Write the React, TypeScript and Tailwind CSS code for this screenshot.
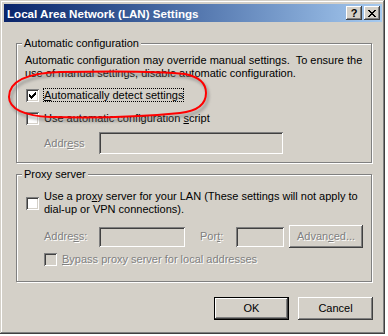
import React from 'react';

const raised =
  'shadow-[inset_-1px_-1px_0_#404040,inset_1px_1px_0_#ffffff,inset_-2px_-2px_0_#808080,inset_2px_2px_0_#d4d0c8]';
const sunken =
  'shadow-[inset_1px_1px_0_#808080,inset_-1px_-1px_0_#ffffff,inset_2px_2px_0_#404040,inset_-2px_-2px_0_#d4d0c8]';

function CheckBox({ checked, disabled }: { checked?: boolean; disabled?: boolean }) {
  return (
    <div
      className={`relative w-[13px] h-[13px] shrink-0 ${disabled ? 'bg-[#d4d0c8]' : 'bg-white'} ${sunken}`}
    >
      {checked && (
        <svg className="absolute left-[3px] top-[3px]" width="7" height="7" shapeRendering="crispEdges">
          <rect x="0" y="2" width="1" height="3" fill="#000" />
          <rect x="1" y="3" width="1" height="3" fill="#000" />
          <rect x="2" y="4" width="1" height="3" fill="#000" />
          <rect x="3" y="3" width="1" height="3" fill="#000" />
          <rect x="4" y="2" width="1" height="3" fill="#000" />
          <rect x="5" y="1" width="1" height="3" fill="#000" />
          <rect x="6" y="0" width="1" height="3" fill="#000" />
        </svg>
      )}
    </div>
  );
}

function Field({ className }: { className: string }) {
  return <div className={`bg-[#d4d0c8] ${sunken} ${className}`} />;
}

function Legend({ children }: { children: React.ReactNode }) {
  return (
    <span className="absolute left-[7px] top-[-7px] bg-[#d4d0c8] px-[2px] ml-[-2px] leading-[13px]">
      {children}
    </span>
  );
}

const dim = 'text-[#808080] [text-shadow:1px_1px_0_#ffffff]';

export default function App() {
  return (
    <div className="relative w-[388px] h-[336px] bg-white font-['Liberation_Sans',Arial,sans-serif] text-[11px] leading-[13px] text-black">
      <div className="w-[385px] h-[334px] bg-[#d4d0c8] pt-[4px] pl-[4px] pr-[3px] shadow-[inset_-1px_-1px_0_#404040,inset_1px_1px_0_#d4d0c8,inset_-2px_-2px_0_#808080,inset_2px_2px_0_#ffffff]">
        {/* title bar */}
        <div className="flex items-center h-[18px] pl-[3px] pr-[2px] bg-gradient-to-r from-[#0a246a] to-[#a6caf0]">
          <span className="flex-1 text-white font-bold text-[11.6px]">Local Area Network (LAN) Settings</span>
          <div className={`w-[16px] h-[14px] bg-[#d4d0c8] ${raised} flex items-center justify-center font-bold text-[11px]`}>?</div>
          <div className={`ml-[2px] w-[16px] h-[14px] bg-[#d4d0c8] ${raised} flex items-center justify-center`}>
            <svg width="8" height="7" shapeRendering="crispEdges">
              <path d="M0 0h2v1h-2zM6 0h2v1h-2zM1 1h2v1h-2zM5 1h2v1h-2zM2 2h4v1h-4zM3 3h2v1h-2zM2 4h4v1h-4zM1 5h2v1h-2zM5 5h2v1h-2zM0 6h2v1h-2zM6 6h2v1h-2z" fill="#000" />
            </svg>
          </div>
        </div>

        <div className="pl-[12px]">
          {/* Automatic configuration */}
          <div className="relative mt-[21px] w-[356px] h-[120px] border border-[#808080] shadow-[1px_1px_0_#ffffff,inset_1px_1px_0_#ffffff] pl-[8px] pt-[10px]">
            <Legend>Automatic configuration</Legend>
            <p className="whitespace-pre">Automatic configuration may override manual settings.  To ensure the</p>
            <p>use of manual settings, disable automatic configuration.</p>
            <div className="flex items-center mt-[8px] pl-[1px]">
              <CheckBox checked />
              <span className="ml-[4px] border border-dotted border-black leading-[12px]">
                <span className="underline underline-offset-[1px]">A</span>utomatically detect settings
              </span>
            </div>
            <div className="flex items-center mt-[10px] pl-[1px]">
              <CheckBox />
              <span className="ml-[5px]">
                Use automatic configuration <span className="underline underline-offset-[1px]">s</span>cript
              </span>
            </div>
            <div className="flex items-center mt-[7px] pl-[19px]">
              <span className={`w-[55px] ${dim}`}>
                Addr<span className="underline underline-offset-[1px]">e</span>ss
              </span>
              <Field className="w-[184px] h-[22px]" />
            </div>
          </div>

          {/* Proxy server */}
          <div className="relative mt-[11px] w-[356px] h-[108px] border border-[#808080] shadow-[1px_1px_0_#ffffff,inset_1px_1px_0_#ffffff] pl-[8px] pt-[15px]">
            <Legend>Proxy server</Legend>
            <div className="flex items-center pl-[1px]">
              <CheckBox />
              <div className="ml-[5px] flex flex-col">
                <span>
                  Use a pro<span className="underline underline-offset-[1px]">x</span>y server for your LAN (These settings will not apply to
                </span>
                <span>dial-up or VPN connections).</span>
              </div>
            </div>
            <div className="flex items-center mt-[9px] pl-[19px]">
              <span className={`w-[55px] ${dim}`}>
                Addre<span className="underline underline-offset-[1px]">s</span>s:
              </span>
              <Field className="w-[86px] h-[20px]" />
              <span className={`ml-[15px] w-[36px] ${dim}`}>
                Por<span className="underline underline-offset-[1px]">t</span>:
              </span>
              <Field className="w-[48px] h-[20px]" />
              <div className={`ml-[5px] w-[74px] h-[23px] ${raised} flex items-center justify-center ${dim}`}>
                Advan<span className="underline underline-offset-[1px]">c</span>ed...
              </div>
            </div>
            <div className="flex items-center mt-[5px] pl-[19px]">
              <CheckBox disabled />
              <span className={`ml-[5px] ${dim}`}>
                <span className="underline underline-offset-[1px]">B</span>ypass proxy server for local addresses
              </span>
            </div>
          </div>

          {/* buttons */}
          <div className="flex justify-end gap-[9px] mt-[15px] w-[357px]">
            <div className="w-[75px] h-[23px] border border-black shadow-[inset_-1px_-1px_0_#404040,inset_1px_1px_0_#ffffff,inset_-2px_-2px_0_#808080] flex items-center justify-center">
              OK
            </div>
            <div className={`w-[75px] h-[23px] ${raised} flex items-center justify-center`}>Cancel</div>
          </div>
        </div>
      </div>

      {/* red annotation ellipse */}
      <svg className="absolute left-0 top-0 pointer-events-none" width="388" height="336">
        <defs>
          <filter id="blur" x="-10%" y="-30%" width="120%" height="160%">
            <feGaussianBlur stdDeviation="1.5" />
          </filter>
        </defs>
        <path
          d="M9 97 C9 80 28 73 60 72 C110 71 160 71 185 74 C200 77 206 84 206 93 C206 104 198 111 180 113 C140 117 90 118 50 117 C25 116 9 109 9 97 Z"
          fill="none"
          stroke="#777"
          strokeWidth="2.5"
          opacity="0.6"
          transform="translate(2 3)"
          filter="url(#blur)"
        />
        <path
          d="M9 97 C9 80 28 73 60 72 C110 71 160 71 185 74 C200 77 206 84 206 93 C206 104 198 111 180 113 C140 117 90 118 50 117 C25 116 9 109 9 97 Z"
          fill="none"
          stroke="#ff0000"
          strokeWidth="2"
        />
      </svg>
    </div>
  );
}
